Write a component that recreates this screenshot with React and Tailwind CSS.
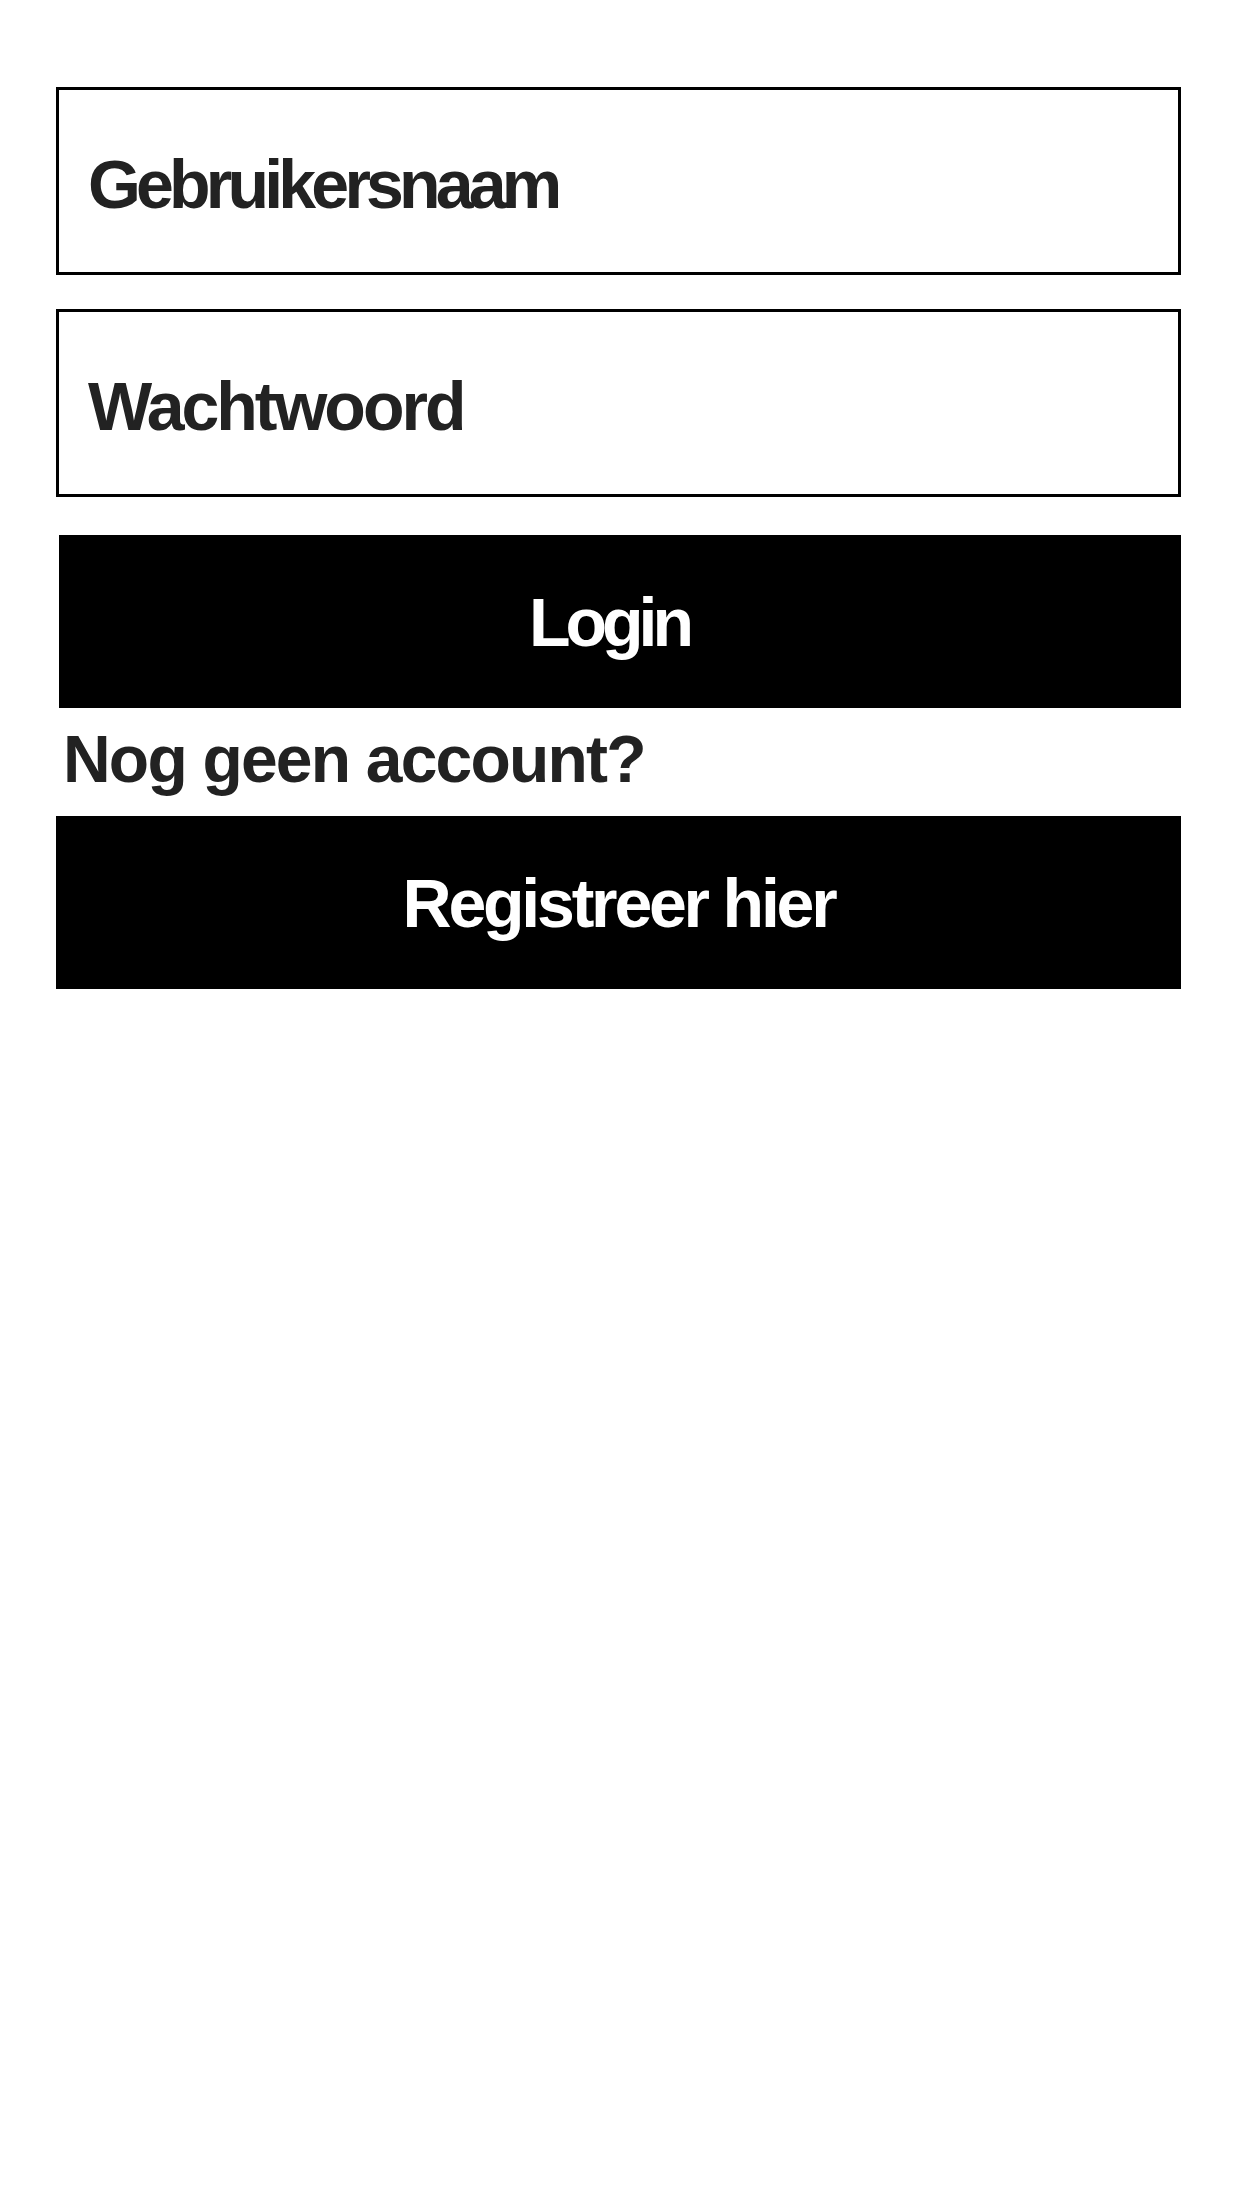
import React, { useState } from "react";

const App = () => {
  const [gebruikersnaam, setGebruikersnaam] = useState("");
  const [wachtwoord, setWachtwoord] = useState("");

  const handleLogin = (e) => {
    e.preventDefault();
  };

  return (
    <div className="min-h-screen w-full bg-white font-['Liberation_Sans',Arial,sans-serif]">
      <form onSubmit={handleLogin} className="flex flex-col w-[1125px] ml-[56px] pt-[87px]">
        <input
          type="text"
          placeholder="Gebruikersnaam"
          value={gebruikersnaam}
          onChange={e => setGebruikersnaam(e.target.value)}
          className="h-[188px] w-full border-[3px] border-black pl-[29px] pt-[6px] text-[68px] font-bold tracking-[-4.8px] text-[#222] placeholder:text-[#222] outline-none"
        />
        <input
          type="password"
          placeholder="Wachtwoord"
          value={wachtwoord}
          onChange={e => setWachtwoord(e.target.value)}
          className="mt-[34px] h-[188px] w-full border-[3px] border-black pl-[29px] pt-[6px] text-[68px] font-bold tracking-[-3px] text-[#222] placeholder:text-[#222] outline-none"
        />
        <button
          type="submit"
          className="mt-[38px] ml-[3px] h-[173px] bg-black text-white text-[68px] font-bold tracking-[-5px] pr-[22px]"
        >
          Login
        </button>
        <p className="mt-[13px] pl-[7px] text-[66px] leading-[76px] font-bold tracking-[-1.8px] text-[#222]">
          Nog geen account?
        </p>
        <button
          type="button"
          className="mt-[19px] h-[173px] bg-black text-white text-[68px] font-bold tracking-[-3.2px]"
        >
          Registreer hier
        </button>
      </form>
    </div>
  );
};

export default App;
